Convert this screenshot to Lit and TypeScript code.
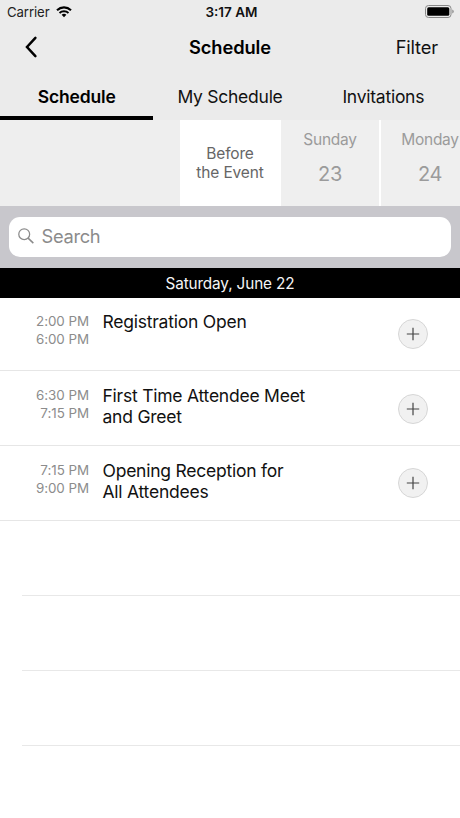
import { LitElement, html, css } from "lit";
import { customElement, property } from "lit/decorators.js";

interface Session {
  start: string;
  end: string;
  title: string[];
}

const SESSIONS: Session[] = [
  { start: "2:00 PM", end: "6:00 PM", title: ["Registration Open"] },
  { start: "6:30 PM", end: "7:15 PM", title: ["First Time Attendee Meet", "and Greet"] },
  { start: "7:15 PM", end: "9:00 PM", title: ["Opening Reception for", "All Attendees"] },
];

const TABS = ["Schedule", "My Schedule", "Invitations"];

@customElement("status-bar")
class StatusBar extends LitElement {
  static styles = css`
    :host { display: grid; grid-template-columns: 1fr auto 1fr; align-items: center; height: 24px; padding: 0 6px 0 7px; box-sizing: border-box; }
    .carrier { display: flex; align-items: center; gap: 6px; font-size: 13.2px; letter-spacing: -0.1px; color: #222; }
    .time { font-size: 13.5px; font-weight: 600; color: #111; padding-left: 2px; }
    .battery { justify-self: end; display: block; margin-bottom: 2px; }
    svg { display: block; }
  `;
  render() {
    return html`
      <div class="carrier">
        <span>Carrier</span>
        <svg width="16" height="12" viewBox="0 0 16 12">
          <path d="M1 4.2C5 .4 11 .4 15 4.2" fill="none" stroke="#000" stroke-width="2.1" />
          <path d="M3.5 7C6 4.7 10 4.7 12.5 7" fill="none" stroke="#000" stroke-width="1.9" />
          <path d="M5.6 8.8Q8 6.9 10.4 8.8L8 11.3Z" fill="#000" />
        </svg>
      </div>
      <div class="time">3:17 AM</div>
      <svg class="battery" width="29" height="13" viewBox="0 0 29 13">
        <rect x=".5" y=".5" width="25.5" height="12" rx="3" fill="none" stroke="#888" />
        <rect x="2.2" y="2.2" width="22.1" height="8.6" rx="1.5" fill="#000" />
        <path d="M27.3 4.5q1.4.5 1.4 2t-1.4 2z" fill="#888" />
      </svg>
    `;
  }
}

@customElement("session-row")
class SessionRow extends LitElement {
  @property({ attribute: false }) session!: Session;
  static styles = css`
    :host { display: flex; align-items: flex-start; height: 74.95px; border-bottom: 1px solid #e6e6e6; box-sizing: border-box; }
    :host(:first-child) { height: 73px; }
    .times { width: 89px; padding-top: 15px; text-align: right; font-size: 13.4px; line-height: 18px; letter-spacing: -0.05px; color: #8c8c8c; white-space: nowrap; }
    .title { flex: 1; padding: 14px 0 0 13.5px; font-size: 17.5px; line-height: 21px; letter-spacing: -0.23px; color: #111; white-space: nowrap; }
    .add { width: 30px; height: 30px; margin: 22.5px 32px 0 0; padding: 0; border: 1px solid #d6d6d6; border-radius: 50%; background: #f1f1f1; display: grid; place-items: center; box-sizing: border-box; }
    :host(:first-child) .times { padding-top: 14px; }
    :host(:first-child) .title { padding-top: 13px; }
    :host(:first-child) .add { margin-top: 21px; }
    svg { display: block; }
  `;
  render() {
    const s = this.session;
    return html`
      <div class="times"><div>${s.start}</div><div>${s.end}</div></div>
      <div class="title">${s.title.map((line) => html`<div>${line}</div>`)}</div>
      <button class="add" aria-label="Add">
        <svg width="14" height="14" viewBox="0 0 14 14"><path d="M7 .8v12.4M.8 7h12.4" stroke="#444" stroke-width="1.2" /></svg>
      </button>
    `;
  }
}

@customElement("app-root")
class AppRoot extends LitElement {
  static styles = css`
    :host { display: flex; flex-direction: column; height: 818px; overflow: hidden; background: #fff; font-family: Inter, "Liberation Sans", sans-serif; color: #111; }
    .top { background: #ebebeb; }
    .nav { display: grid; grid-template-columns: 1fr auto 1fr; align-items: center; height: 46px; padding: 0 22px; }
    .heading { font-size: 18.3px; font-weight: 600; letter-spacing: -0.1px; color: #000; }
    .filter { justify-self: end; font-size: 18.3px; letter-spacing: -0.15px; }
    .back { display: block; margin-left: 2px; }
    .tabs { display: grid; grid-template-columns: repeat(3, 1fr); height: 50px; }
    .tab { display: flex; align-items: center; justify-content: center; padding-top: 6px; box-sizing: border-box; border-bottom: 4px solid transparent; font-size: 17.5px; letter-spacing: -0.25px; }
    .tab.active { font-weight: 600; border-color: #000; color: #000; letter-spacing: -0.15px; }
    .days { display: flex; height: 86px; padding-left: 180px; background: #eeeeee; overflow: hidden; color: #9b9b9b; }
    .day { flex: none; width: 100px; box-sizing: border-box; border-right: 2px solid #fff; background: #efefef; text-align: center; }
    .day.selected { width: 101px; border: 0; background: #fff; color: #666; font-size: 15.5px; line-height: 18.5px; letter-spacing: -0.15px; padding: 25px 1px 0 0; }
    .name { font-size: 15.5px; line-height: 20px; letter-spacing: -0.25px; padding-top: 10px; }
    .num { font-size: 20px; line-height: 24px; letter-spacing: -0.4px; padding-top: 12px; }
    .search { background: #c8c7cc; padding: 11px 9px; }
    .field { display: flex; align-items: center; gap: 7px; height: 40px; padding-left: 9px; border-radius: 11px; background: #fff; color: #8b8b8b; font-size: 18.3px; letter-spacing: -0.3px; }
    .field svg { display: block; margin-top: -1px; }
    .field span { display: block; margin-top: -2px; }
    .date { height: 30px; line-height: 31px; background: #000; color: #f5f5f5; text-align: center; font-size: 15.3px; letter-spacing: -0.12px; }
    .blank { height: 74.95px; margin-left: 22px; box-sizing: border-box; border-bottom: 1px solid #e8e8e8; }
  `;
  render() {
    return html`
      <div class="top">
        <status-bar></status-bar>
        <div class="nav">
          <svg class="back" width="14" height="22" viewBox="0 0 14 22"><path d="M11.4 1.9L3 11l8.4 9.1" fill="none" stroke="#000" stroke-width="2.5" stroke-linecap="round" /></svg>
          <div class="heading">Schedule</div>
          <div class="filter">Filter</div>
        </div>
        <div class="tabs">
          ${TABS.map((t, i) => html`<div class="tab ${i === 0 ? "active" : ""}">${t}</div>`)}
        </div>
      </div>
      <div class="days">
        <div class="day selected">Before<br />the Event</div>
        <div class="day"><div class="name">Sunday</div><div class="num">23</div></div>
        <div class="day"><div class="name">Monday</div><div class="num">24</div></div>
      </div>
      <div class="search">
        <div class="field">
          <svg width="16.5" height="16.5" viewBox="0 0 17 17" fill="none" stroke="#8b8b8b" stroke-width="1.3"><circle cx="6.4" cy="6.4" r="5.6" /><path d="M10.4 10.4l5.4 5.2" stroke-width="1.6" /></svg>
          <span>Search</span>
        </div>
      </div>
      <div class="date">Saturday, June 22</div>
      <div class="list">
        ${SESSIONS.map((s) => html`<session-row .session=${s}></session-row>`)}
        <div class="blank"></div><div class="blank"></div><div class="blank"></div>
      </div>
    `;
  }
}
